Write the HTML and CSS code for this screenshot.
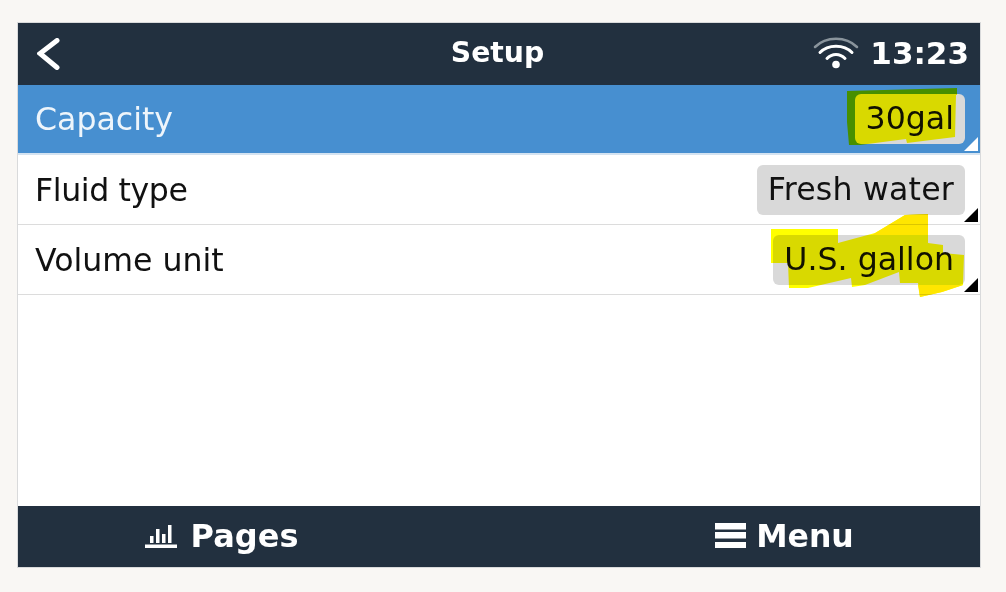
FILE: index.html
```html
<!DOCTYPE html>
<html lang="en">
<head>
<meta charset="UTF-8">
<meta name="viewport" content="width=device-width, initial-scale=1.0">
<title>Setup</title>
<link rel="stylesheet" href="styles.css">
</head>
<body>
<div id="screen">
    <header class="top">
        <svg class="back" width="24" height="32" viewBox="0 0 24 32">
            <path d="M20 2.500 3 15.500 20 29.500" fill="none" stroke="#fff" stroke-width="5" stroke-linecap="round" stroke-linejoin="miter"/>
        </svg>
        <h1 class="title">Setup</h1>
        <div class="status">
            <svg class="wifi" width="46" height="32" viewBox="0 0 46 32">
                <path d="M2 10C13 -1 33 -1 44 10" fill="none" stroke="#8a949c" stroke-width="2.500" stroke-linecap="round"/>
                <path d="M7 15.500C15 7 31 7 39 15.500" fill="none" stroke="#fff" stroke-width="3" stroke-linecap="round"/>
                <path d="M14 21.500C19 16 27 16 32 21.500" fill="none" stroke="#fff" stroke-width="3" stroke-linecap="round"/>
                <circle cx="23" cy="27.500" r="3.800" fill="#fff"/>
            </svg>
            <span class="time">13:23</span>
        </div>
    </header>
    <ul class="list">
        <li class="row selected">
            <span>Capacity</span>
            <span class="value">30gal</span>
        </li>
        <li class="row">
            <span class="tight">Fluid type</span>
            <span class="value wide">Fresh water</span>
        </li>
        <li class="row">
            <span>Volume unit</span>
            <span class="value">U.S. gallon</span>
        </li>
    </ul>
    <footer class="bottom">
        <div class="tab pages">
            <svg width="32" height="24" viewBox="0 0 32 24">
                <path d="M0 20.500h32v3.500H0zM5 12h3.500v7H5zM11 5h3.500v14H11zM17 10h3.500v9H17zM23 1h3.500v18H23z" fill="#fff"/>
            </svg>
            <span>Pages</span>
        </div>
        <div class="tab menu">
            <svg width="31" height="25" viewBox="0 0 31 25">
                <path d="M0 0h31v6.500H0zM0 9h31v6.500H0zM0 19h31v6H0z" fill="#fff"/>
            </svg>
            <span>Menu</span>
        </div>
    </footer>
</div>
<svg class="marker" width="1006" height="592" viewBox="0 0 1006 592">
    <polygon points="847,91 957,88 957,95 956,95 955,137 907,143 906,139 860,145 849,145 847,122"/>
    <polygon points="771,229 838,229 838,243 875,233 905,215 928,214 928,243 943,245 943,253 964,255 963,285 942,292 920,297 918,283 900,283 899,272 865,285 852,287 851,278 808,288 789,288 788,263 771,263"/>
    <polygon class="thin" points="872,235 905,215 928,214 928,235"/>
    <polygon class="thin" points="918,285 963,285 942,292 920,297"/>
</svg>
</body>
</html>
```

FILE: styles.css
```css
* {box-sizing: border-box;}
ul {margin: 0;padding: 0;list-style: none;}
html, body {height: 100%;}
body {margin: 0;padding: 22px 25px 24px 17px;background: #f9f7f4;font-family: "DejaVu Sans", sans-serif;color: #111;overflow: hidden;}
#screen {display: flex;flex-direction: column;width: 964px;height: 546px;border: 1px solid #d9dadb;background: #fff;}

.top {display: flex;align-items: center;justify-content: space-between;position: relative;flex: none;height: 62px;padding: 0 11px 3px 19px;background: #22303f;color: #fff;}
.back {display: block;margin-top: 2px;}
.title {position: absolute;left: 0;right: 3px;margin: 0;font-size: 28.300px;font-weight: bold;text-align: center;}
.status {display: flex;align-items: center;gap: 11px;}
.time {font-size: 31px;font-weight: bold;}

.list {flex: 1;}
.row {display: flex;align-items: center;justify-content: space-between;position: relative;height: 70px;padding: 0 15px 0 17px;border-bottom: 1px solid #dcdcdc;font-size: 31.600px;}
.tight {letter-spacing: -.4px;}
.value {padding: 3px 11px 4px;background: #d9d9d9;border-radius: 6px;line-height: 43px;}
.wide {letter-spacing: .2px;}
.row::after {content: "";position: absolute;right: 2px;bottom: 2px;border-style: solid;border-width: 0 0 14px 14px;border-color: transparent transparent #000 transparent;}
.selected {height: 70px;background: #478fd0;border-bottom: 2px solid #d4e3f1;color: #eef5fb;}
.selected .value {color: #111;}
.selected::after {border-bottom-color: #fff;}

.bottom {display: flex;flex: none;height: 61px;background: #22303f;color: #fff;font-size: 31.500px;font-weight: bold;}
.tab {display: flex;align-items: center;justify-content: center;width: 50%;padding-bottom: 2px;}
.pages {gap: 14px;padding-right: 74px;font-size: 32px;}
.menu {gap: 10px;padding-left: 90px;}

.marker {position: absolute;left: 0;top: 0;mix-blend-mode: multiply;pointer-events: none;}
.marker polygon {fill: #ffff00;}
.marker .thin {fill: #ffe600;}
```
